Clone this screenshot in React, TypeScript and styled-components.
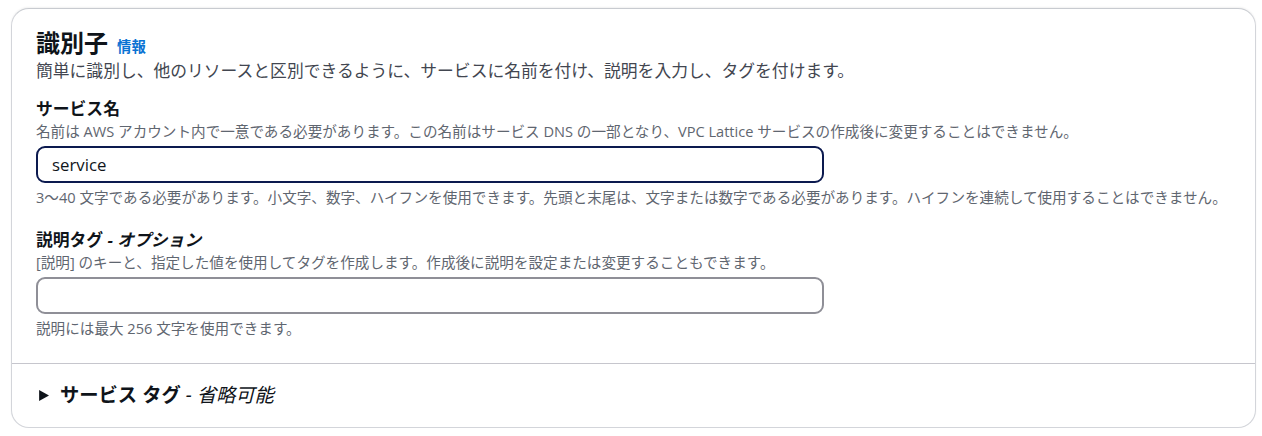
import styled, { createGlobalStyle } from "styled-components";

const GlobalStyle = createGlobalStyle`
  html, body {
    margin: 0;
    background: #ffffff;
  }
  body {
    padding: 8px 6px 0 11px;
    font-family: "Open Sans", "Noto Sans CJK JP", sans-serif;
    color: #0f141a;
  }
`;

const Card = styled.section`
  border: 1px solid #d3d5da;
  border-top-color: #c8cbd0;
  border-radius: 18px;
  box-shadow: 0 -1px 2px rgb(0 7 22 / 6%);
  background: #ffffff;
  overflow: hidden;
`;

const Body = styled.div`
  padding: 19px 24px 25px 24px;
`;

const HeaderRow = styled.div`
  display: flex;
  align-items: baseline;
  gap: 9px;
`;

const Title = styled.h2`
  margin: 0;
  font-size: 24px;
  line-height: 29px;
  font-weight: 700;
  color: #0f141a;
`;

const InfoLink = styled.a`
  font-size: 14.4px;
  font-weight: 700;
  color: #0972d3;
  text-decoration: none;
`;

const HeaderDescription = styled.p`
  margin: 2px 0 0;
  font-size: 16.8px;
  line-height: 24px;
  color: #424650;
`;

const Field = styled.div<{ $gap: number }>`
  display: flex;
  flex-direction: column;
  margin-top: ${({ $gap }) => $gap}px;
`;

const Label = styled.label`
  margin-bottom: 1px;
  font-size: 16.8px;
  line-height: 22px;
  font-weight: 700;
  color: #0f141a;

  i {
    font-style: italic;
  }
`;

const SmallText = styled.div`
  font-size: 14.6px;
  line-height: 20px;
  color: #5f6670;
`;

const Input = styled.input<{ $active?: boolean }>`
  box-sizing: border-box;
  width: 788px;
  height: 37px;
  margin: 5px 0 4px;
  padding: 0 14px;
  border-radius: 9px;
  border: 2px solid ${({ $active }) => ($active ? "#0c1a4f" : "#8f8f97")};
  font-family: inherit;
  font-size: 16.8px;
  color: #0f141a;
  background: #ffffff;
  outline: none;
`;

const Divider = styled.hr`
  margin: 0;
  border: 0;
  border-top: 1px solid #c6c6cd;
`;

const Expander = styled.div`
  display: flex;
  align-items: center;
  gap: 11px;
  padding: 18px 24px 19px 26px;
  font-size: 19.3px;
  line-height: 26px;
`;

const Caret = styled.svg`
  width: 11px;
  height: 11px;
  flex: none;
`;

const ExpanderTitle = styled.span`
  font-weight: 700;
  color: #0f141a;
`;

const ExpanderSuffix = styled.span`
  font-style: italic;
  color: #0f141a;
`;

export default function App() {
  return (
    <>
      <GlobalStyle />
      <Card>
        <Body>
          <HeaderRow>
            <Title>識別子</Title>
            <InfoLink href="#">情報</InfoLink>
          </HeaderRow>
          <HeaderDescription>
            簡単に識別し、他のリソースと区別できるように、サービスに名前を付け、説明を入力し、タグを付けます。
          </HeaderDescription>

          <Field $gap={15}>
            <Label>サービス名</Label>
            <SmallText>
              名前は AWS アカウント内で一意である必要があります。この名前はサービス DNS の一部となり、VPC Lattice サービスの作成後に変更することはできません。
            </SmallText>
            <Input $active defaultValue="service" />
            <SmallText>
              3～40 文字である必要があります。小文字、数字、ハイフンを使用できます。先頭と末尾は、文字または数字である必要があります。ハイフンを連続して使用することはできません。
            </SmallText>
          </Field>

          <Field $gap={22}>
            <Label>
              説明タグ <i>- オプション</i>
            </Label>
            <SmallText>
              [説明] のキーと、指定した値を使用してタグを作成します。作成後に説明を設定または変更することもできます。
            </SmallText>
            <Input />
            <SmallText>説明には最大 256 文字を使用できます。</SmallText>
          </Field>
        </Body>
        <Divider />
        <Expander>
          <Caret viewBox="0 0 10 10">
            <path d="M1 0 L10 5 L1 10 Z" fill="#0f141a" />
          </Caret>
          <span>
            <ExpanderTitle>サービス タグ</ExpanderTitle>{" "}
            <ExpanderSuffix>- 省略可能</ExpanderSuffix>
          </span>
        </Expander>
      </Card>
    </>
  );
}
